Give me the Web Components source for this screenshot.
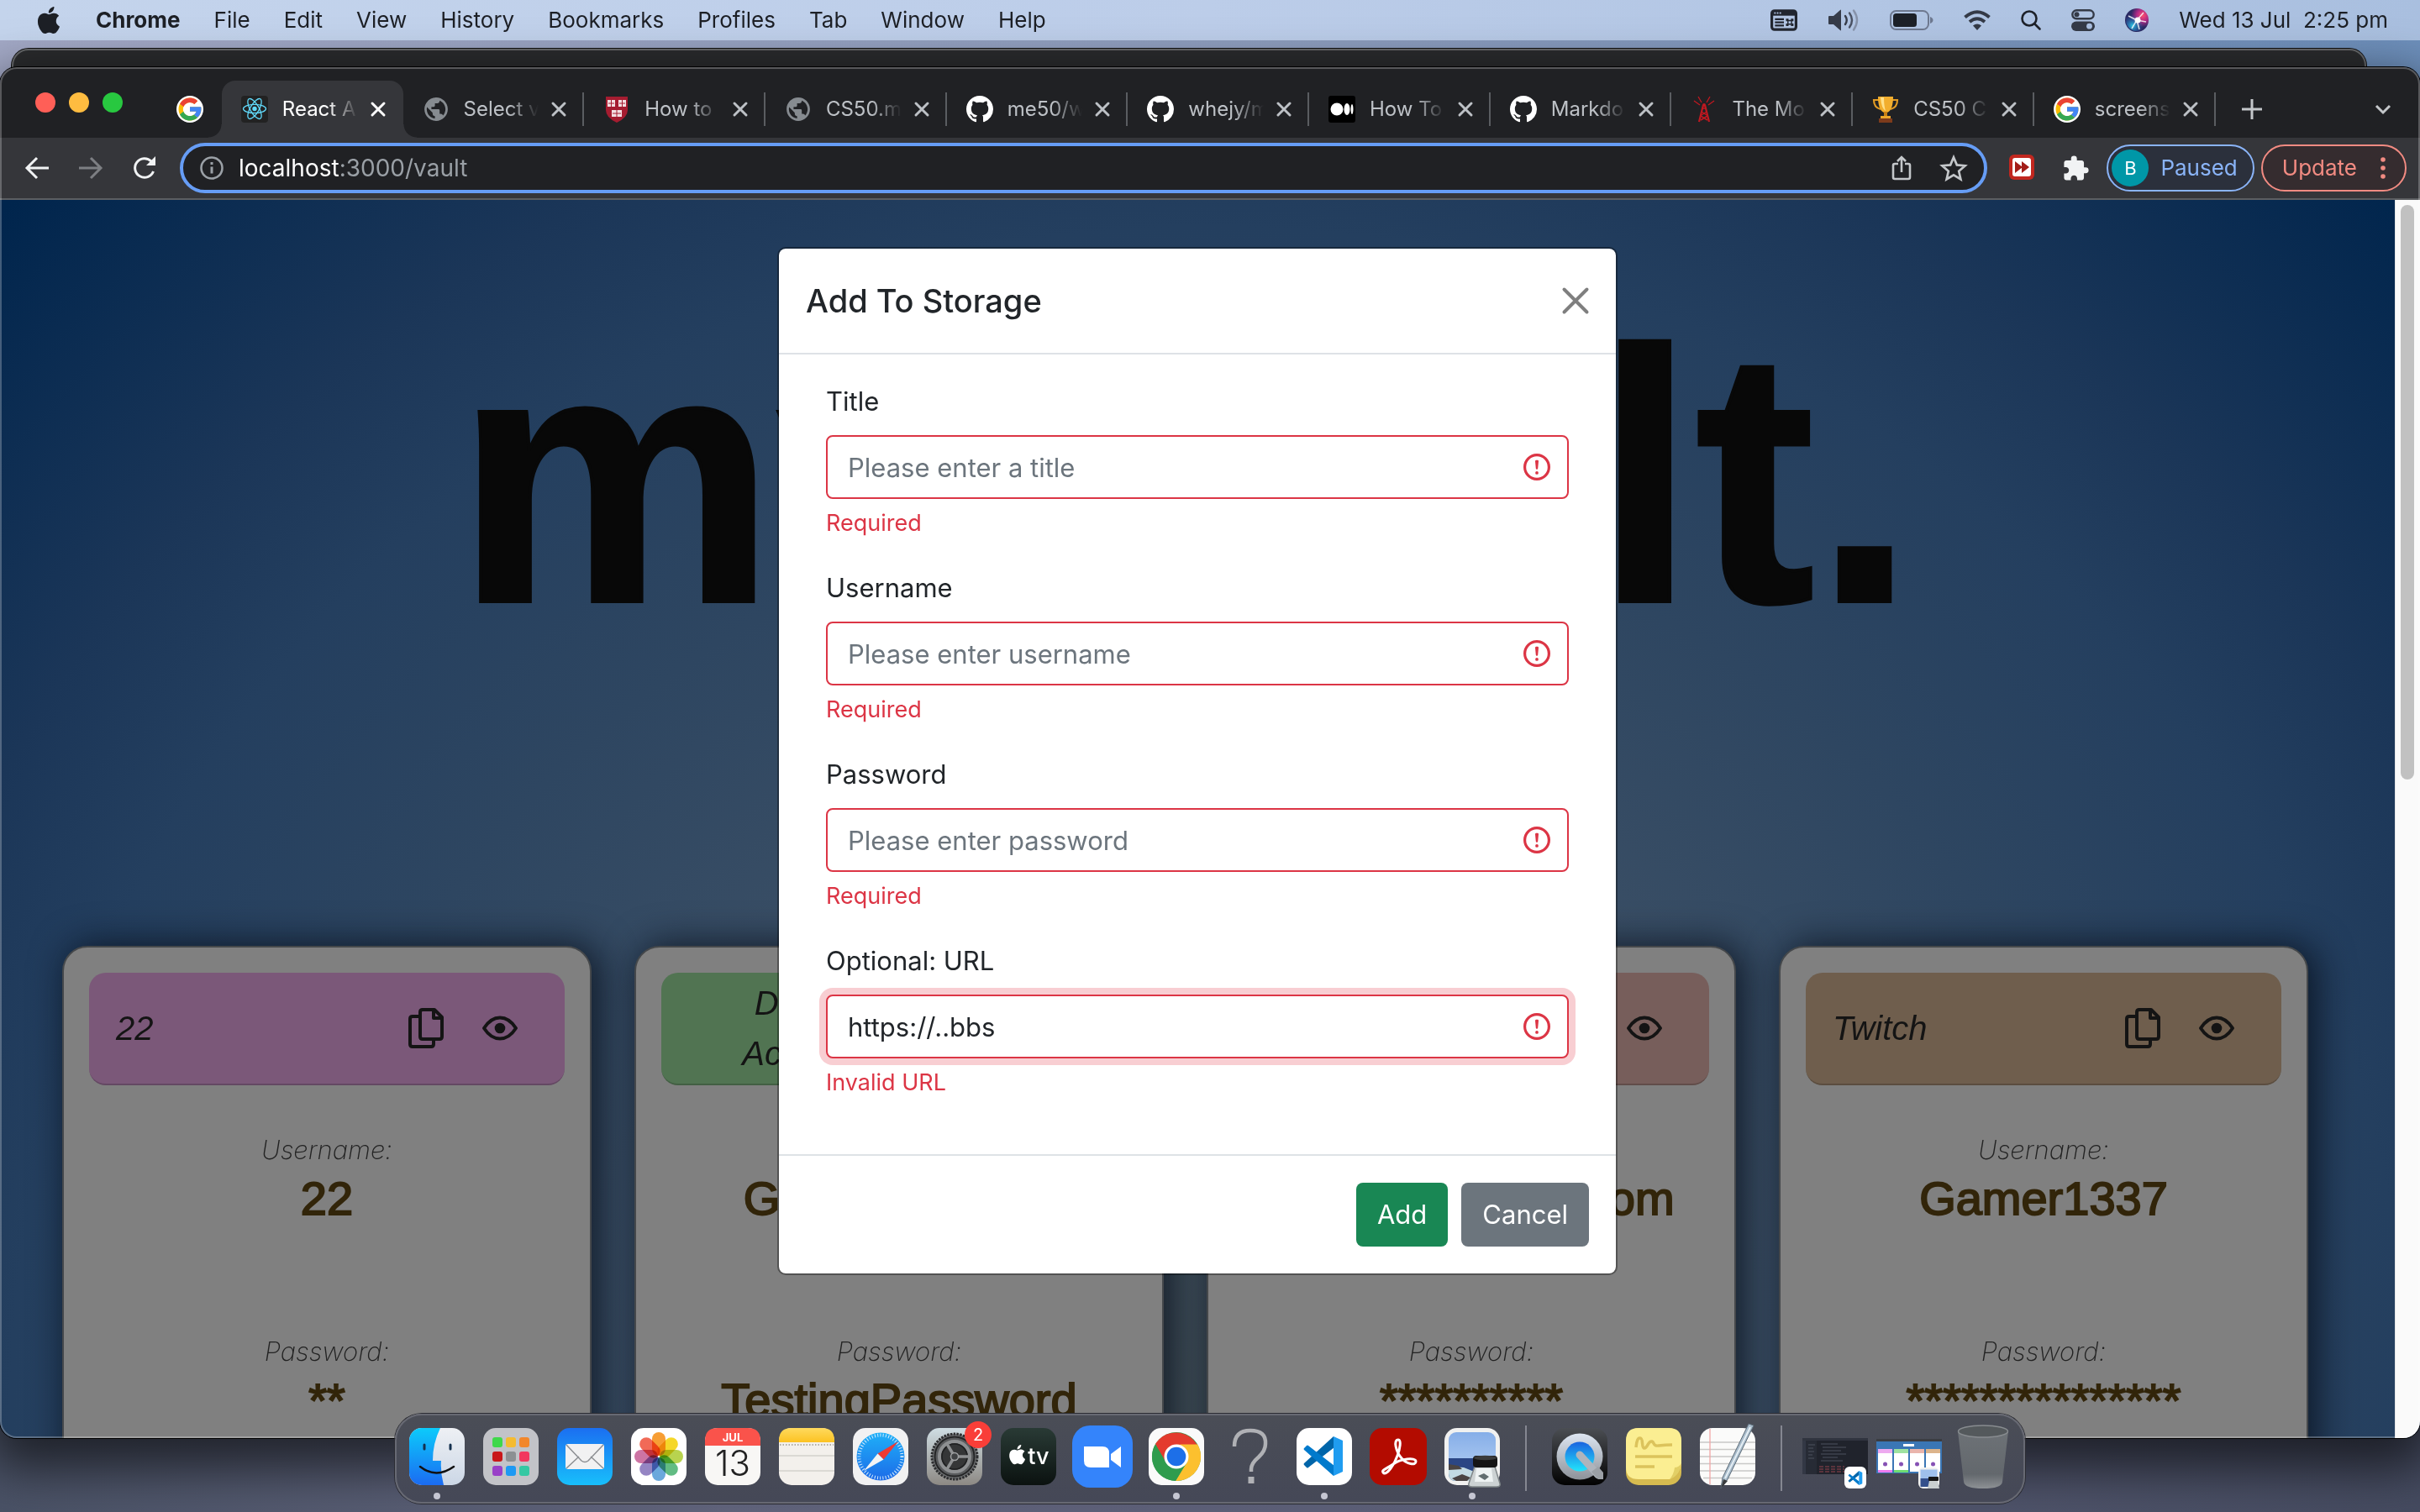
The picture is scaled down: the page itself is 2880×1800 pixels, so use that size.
<!DOCTYPE html>
<html lang="en">
<head>
<meta charset="utf-8">
<title>myVault</title>
<style>
  html, body { height: 100%; }
  body { margin: 0; overflow: hidden; font-family: Inter, "Liberation Sans", sans-serif; }
</style>
</head>
<body>
<desk-top></desk-top>
<script>
const ICONS = {
  apple: `<svg viewBox="0 0 16 16" fill="currentColor"><path d="M11.182.008C11.148-.03 9.923.023 8.857 1.18c-1.066 1.156-.902 2.482-.878 2.516s1.52.087 2.475-1.258.762-2.391.728-2.43m3.314 11.733c-.048-.096-2.325-1.234-2.113-3.422s1.675-2.789 1.698-2.854-.597-.79-1.254-1.157a3.7 3.7 0 0 0-1.563-.434c-.108-.003-.483-.095-1.254.116-.508.139-1.653.589-1.968.607-.316.018-1.256-.522-2.267-.665-.647-.125-1.333.131-1.824.328-.49.196-1.422.754-2.074 2.237-.652 1.482-.311 3.83-.067 4.56s.625 1.924 1.273 2.796c.576.984 1.34 1.667 1.659 1.899s1.219.386 1.843.067c.502-.308 1.408-.485 1.766-.472.357.013 1.061.154 1.782.539.571.197 1.111.115 1.652-.105.541-.221 1.324-1.059 2.238-2.758q.52-1.185.473-1.282"/></svg>`,
  shortcuts: `<svg viewBox="0 0 30 24"><rect x="1.5" y="1.5" width="27" height="21" rx="3" fill="none" stroke="#22262f" stroke-width="3"/><path d="M2 2h26v5H2z" fill="#22262f"/><g fill="#b0c3e2"><circle cx="5" cy="4" r="1"/><circle cx="8" cy="4" r="1"/><circle cx="11" cy="4" r="1"/></g><path d="M5 11h10M5 14.500h10M5 18h10" stroke="#22262f" stroke-width="2"/><path d="M19.500 12.500h4v4h-4zM19.500 12.500h-1.500v-1.500h1.500zM23.500 12.500v-1.500h1.500v1.500zM19.500 16.500v1.500h-1.500v-1.500zM23.500 16.500h1.500v1.500h-1.500z" fill="none" stroke="#22262f" stroke-width="1.300"/></svg>`,
  volume: `<svg viewBox="0 0 36 26"><path d="M0 9q0-1 1-1h5l8-7q1-1 1 .500v23q0 1.500-1 .500l-8-7H1q-1 0-1-1z" fill="#363c49"/><g fill="none" stroke-width="2.400" stroke-linecap="round"><path d="M20 8q3.500 5 0 10" stroke="#363c49"/><path d="M25 4.500q6 8.500 0 17" stroke="#4a5263"/><path d="M30 1.500q8 11.500 0 23" stroke="#8793aa"/></g></svg>`,
  battery: `<svg viewBox="0 0 52 24"><rect x="1" y="1" width="45" height="22" rx="6.500" fill="none" stroke="#6e7990" stroke-width="2"/><rect x="4" y="4" width="28" height="16" rx="3.500" fill="#1d2128"/><path d="M48 8q3.500 1.500 3.500 4T48 16z" fill="#6e7990"/></svg>`,
  wifi: `<svg viewBox="0 0 32 24" fill="none" stroke="#343a47" stroke-width="4"><path d="M1.500 8.500q14.500-12.500 29 0"/><path d="M7 14q9-7.500 18 0"/><path d="M16 24l-5-5.500q5-4 10 0z" fill="#343a47" stroke="none"/></svg>`,
  search: `<svg viewBox="0 0 24 24" fill="none" stroke="#1e222a" stroke-width="2.600" stroke-linecap="round"><circle cx="10" cy="10" r="8.500"/><path d="M16.500 16.500l6 6"/></svg>`,
  toggles: `<svg viewBox="0 0 28 26"><rect x="1.300" y="1.300" width="25.400" height="10" rx="5" fill="none" stroke="#343a47" stroke-width="2.400"/><circle cx="6.500" cy="6.300" r="3" fill="#343a47"/><rect y="14.500" width="28" height="11.500" rx="5.700" fill="#343a47"/><circle cx="21.500" cy="20.200" r="3.400" fill="#aabfe0"/></svg>`,
  siri: `<svg viewBox="0 0 28 28"><defs><radialGradient id="a" cx=".75" cy=".3"><stop offset="0" stop-color="#ff4f6e"/><stop offset=".5" stop-color="#b02a86"/><stop offset="1" stop-color="#2a2a63"/></radialGradient><radialGradient id="b" cx=".3" cy=".75"><stop offset="0" stop-color="#2cc9e6"/><stop offset="1" stop-color="#2a5fc0" stop-opacity="0"/></radialGradient></defs><circle cx="14" cy="14" r="14" fill="url(#a)"/><circle cx="14" cy="14" r="13" fill="url(#b)"/><path d="M14 14L4 9M14 14l-6 10M14 14l3 11M14 14l8-9M14 14l11 2" stroke="#fff" stroke-width="1.600" opacity=".8"/><circle cx="15" cy="14" r="3.500" fill="#fff"/></svg>`,
  google: `<svg viewBox="0 0 32 32"><circle cx="16" cy="16" r="16" fill="#fff"/><g transform="translate(-.200 -.200) scale(.675)"><path fill="#FBBC05" d="M43.611,20.083H42V20H24v8h11.303c-1.649,4.657-6.08,8-11.303,8c-6.627,0-12-5.373-12-12c0-6.627,5.373-12,12-12c3.059,0,5.842,1.154,7.961,3.039l5.657-5.657C34.046,6.053,29.268,4,24,4C12.955,4,4,12.955,4,24c0,11.045,8.955,20,20,20c11.045,0,20-8.955,20-20C44,22.659,43.862,21.35,43.611,20.083z"/><path fill="#EA4335" d="M6.306,14.691l6.571,4.819C14.655,15.108,18.961,12,24,12c3.059,0,5.842,1.154,7.961,3.039l5.657-5.657C34.046,6.053,29.268,4,24,4C16.318,4,9.656,8.337,6.306,14.691z"/><path fill="#34A853" d="M24,44c5.166,0,9.86-1.977,13.409-5.192l-6.19-5.238C29.211,35.091,26.715,36,24,36c-5.202,0-9.619-3.317-11.283-7.946l-6.522,5.025C9.505,39.556,16.227,44,24,44z"/><path fill="#4285F4" d="M43.611,20.083H42V20H24v8h11.303c-0.792,2.237-2.231,4.166-4.087,5.571l6.19,5.238C36.971,39.205,44,34,44,24C44,22.659,43.862,21.35,43.611,20.083z"/></g></svg>`,
  react: `<svg viewBox="0 0 32 32"><rect width="32" height="32" rx="4" fill="#222"/><g fill="none" stroke="#61dafb" stroke-width="1.300"><ellipse cx="16" cy="15.500" rx="13.500" ry="5.200"/><ellipse cx="16" cy="15.500" rx="13.500" ry="5.200" transform="rotate(60 16 15.500)"/><ellipse cx="16" cy="15.500" rx="13.500" ry="5.200" transform="rotate(120 16 15.500)"/></g><circle cx="16" cy="15.500" r="2.700" fill="#61dafb"/></svg>`,
  globe: `<svg viewBox="0.500 0.500 23 23"><path fill="#868b90" d="M12 2C6.480 2 2 6.480 2 12s4.480 10 10 10 10-4.480 10-10S17.520 2 12 2zm-1 17.930c-3.950-.490-7-3.850-7-7.930 0-.620.080-1.210.210-1.790L9 15v1c0 1.100.900 2 2 2v1.930zm6.900-2.540c-.260-.810-1-1.390-1.900-1.390h-1v-3c0-.550-.450-1-1-1H8v-2h2c.550 0 1-.450 1-1V7h2c1.100 0 2-.900 2-2v-.410c2.930 1.190 5 4.060 5 7.410 0 2.080-.800 3.970-2.100 5.390z"/></svg>`,
  harvard: `<svg viewBox="0 0 32 32"><path d="M3 1h26v16q0 9-13 15Q3 26 3 17z" fill="#a51c30"/><g fill="#f3dfe2"><rect x="5" y="5" width="9" height="8"/><rect x="18" y="5" width="9" height="8"/><rect x="10" y="17" width="12" height="8"/></g><g stroke="#a51c30"><path d="M9.500 5v8M22.500 5v8M16 17v8M6 9h7M19 9h7M11 21h10" stroke-width="1"/></g></svg>`,
  github: `<svg viewBox="0 0 16 16" fill="#fff"><path d="M8 0C3.580 0 0 3.580 0 8c0 3.540 2.290 6.530 5.470 7.590.4.070.55-.170.55-.380 0-.190-.010-.820-.010-1.490-2.010.370-2.530-.490-2.690-.940-.090-.230-.480-.940-.820-1.130-.280-.150-.680-.520-.010-.530.630-.010 1.080.580 1.230.820.720 1.210 1.870.870 2.330.660.070-.520.280-.870.510-1.070-1.780-.2-3.640-.890-3.640-3.950 0-.870.310-1.590.820-2.150-.080-.2-.360-1.020.080-2.120 0 0 .670-.210 2.200.820.640-.180 1.320-.270 2-.270s1.360.090 2 .270c1.530-1.040 2.200-.820 2.200-.820.440 1.100.160 1.920.080 2.120.510.560.820 1.270.820 2.150 0 3.070-1.870 3.750-3.650 3.950.290.250.540.730.540 1.480 0 1.070-.010 1.930-.010 2.200 0 .210.150.460.550.380A8.010 8.010 0 0 0 16 8c0-4.420-3.580-8-8-8"/></svg>`,
  medium: `<svg viewBox="0 0 32 32"><rect width="32" height="32" rx="3" fill="#000"/><g fill="#fff"><circle cx="10" cy="16" r="7.500"/><ellipse cx="22" cy="16" rx="3.500" ry="7"/><ellipse cx="28" cy="16" rx="1.500" ry="6"/></g></svg>`,
  tower: `<svg viewBox="0 0 32 32" fill="none" stroke="#c01820"><path d="M15 11l-5 20M17 11l5 20" stroke-width="2.200"/><path d="M14 15h4M13 19l6 4M19 19l-6 4M12 24l8 5M20 24l-8 5" stroke-width="1.500"/><path d="M13 8L9 1M19 8l4-7M11 11L4 6M21 11l7-5" stroke-width="1.300"/><circle cx="16" cy="11" r="2" fill="#c01820" stroke="none"/></svg>`,
  trophy: `<svg viewBox="0 0 32 32"><path d="M8 5H2q0 9 8 11M24 5h6q0 9-8 11" fill="none" stroke="#e09a24" stroke-width="2.200"/><path d="M7 1h18q0 16-7 19h-4Q7 17 7 1z" fill="#f2ae2e"/><path d="M10 2h4q0 10 2 16-5-3-6-16z" fill="#ffe08a"/><path d="M14 19h4v5h-4z" fill="#c77f14"/><path d="M10 24h12v3H10z" fill="#eca62b"/><path d="M8 27h16v5H8z" fill="#7d3b1b"/></svg>`,
  close: `<svg viewBox="0 0 20 20" stroke="currentColor" stroke-width="3" stroke-linecap="round"><path d="M3 3l14 14M17 3L3 17"/></svg>`,
  plus: `<svg viewBox="0 0 24 24" stroke="currentColor" stroke-width="3"><path d="M12 0v24M0 12h24"/></svg>`,
  chevron: `<svg viewBox="0 0 20 12" fill="none" stroke="currentColor" stroke-width="3"><path d="M2 2l8 8 8-8"/></svg>`,
  back: `<svg viewBox="0 0 28 28" fill="none" stroke="currentColor" stroke-width="3"><path d="M14 2L2 14l12 12M2 14h26"/></svg>`,
  forward: `<svg viewBox="0 0 28 28" fill="none" stroke="currentColor" stroke-width="3"><path d="M14 2l12 12-12 12M26 14H0"/></svg>`,
  reload: `<svg viewBox="0 0 28 28"><path d="M24.500 18A11.300 11.300 0 1 1 22 6" fill="none" stroke="currentColor" stroke-width="3"/><path d="M27 0v11H16z" fill="currentColor"/></svg>`,
  info: `<svg viewBox="0 0 28 28" fill="none" stroke="currentColor"><circle cx="14" cy="14" r="12.500" stroke-width="2.600"/><path d="M14 12.500v8M14 7v3" stroke-width="3"/></svg>`,
  share: `<svg viewBox="0 0 24 30" fill="none" stroke="currentColor" stroke-width="2.600"><path d="M8 10H4q-2 0-2 2v14q0 2 2 2h16q2 0 2-2V12q0-2-2-2h-4M12 20V3M7 7l5-5 5 5"/></svg>`,
  star: `<svg viewBox="0 0 30 30" fill="none" stroke="currentColor" stroke-width="2.500"><path d="M15 3l3.600 8.600 9.200.8-7 6.100 2.100 9.100-7.900-4.800-7.900 4.800 2.100-9.100-7-6.100 9.200-.8z"/></svg>`,
  ffwd: `<svg viewBox="0 0 30 30"><rect width="30" height="30" rx="6" fill="#c1271f"/><rect x="4" y="4" width="22" height="22" rx="3" fill="#fff"/><path d="M7 8l9 7-9 7zM15 8l9 7-9 7z" fill="#a31d18"/></svg>`,
  puzzle: `<svg viewBox="1 0 23 23" fill="#f1f3f4"><path d="M20.500 11H19V7c0-1.100-.9-2-2-2h-4V3.500a2.500 2.500 0 0 0-5 0V5H4c-1.100 0-1.990.9-1.990 2v3.800H3.500c1.490 0 2.700 1.210 2.700 2.700s-1.210 2.700-2.700 2.700H2V20c0 1.100.9 2 2 2h3.800v-1.500c0-1.490 1.210-2.700 2.700-2.700s2.700 1.210 2.700 2.700V22H17c1.100 0 2-.9 2-2v-4h1.500a2.500 2.500 0 0 0 0-5z"/></svg>`,
  dots: `<svg viewBox="0 0 6 28" fill="currentColor"><circle cx="3" cy="4" r="2.800"/><circle cx="3" cy="14" r="2.800"/><circle cx="3" cy="24" r="2.800"/></svg>`,
  copy: `<svg viewBox="0 0 44 50" fill="none" stroke="currentColor" stroke-width="4" stroke-linejoin="round"><path d="M14 11H6q-3 0-3 3v30q0 3 3 3h22q3 0 3-3v-6"/><path d="M17 3h15l9 9v23q0 3-3 3H18q-3 0-3-3V6q0-3 3-3z"/><path d="M31 4v9h10"/></svg>`,
  eye: `<svg viewBox="0 0 42 30"><path d="M2 15Q10 2.500 21 2.500T40 15Q32 27.500 21 27.500T2 15z" fill="none" stroke="currentColor" stroke-width="4" stroke-linejoin="round"/><circle cx="21" cy="15" r="6.300" fill="currentColor"/></svg>`,
  alert: `<svg viewBox="0 0 12 12" fill="none" stroke="#dc3545"><circle cx="6" cy="6" r="5.400" stroke-width="1.200"/><path d="M5.700 3.400h.6L6 6.600z" stroke-linejoin="round" stroke-width=".9"/><circle cx="6" cy="8.600" r=".7" fill="#dc3545" stroke="none"/></svg>`,
  x: `<svg viewBox="0 0 32 32" stroke="#7f7f7f" stroke-width="4" stroke-linecap="round"><path d="M2.500 2.500l27 27M29.500 2.500l-27 27"/></svg>`,

  finder: `<svg viewBox="0 0 66 68"><defs><linearGradient id="a" x2="0" y2="1"><stop stop-color="#0ccbfb"/><stop offset="1" stop-color="#1b6bf2"/></linearGradient><linearGradient id="b" x2="0" y2="1"><stop stop-color="#eef0f4"/><stop offset="1" stop-color="#ccd7e6"/></linearGradient><clipPath id="c"><rect width="66" height="68" rx="15"/></clipPath></defs><g clip-path="url(#c)"><rect width="66" height="68" fill="url(#b)"/><path d="M0 0h37Q28 18 28 39h10q-1 14 3 29H0z" fill="url(#a)"/></g><path d="M18 20v5M49 20v5" stroke="#15304e" stroke-width="3" stroke-linecap="round"/><path d="M13 46q19 15 40 0" fill="none" stroke="#111" stroke-width="2.500" stroke-linecap="round"/></svg>`,
  launchpad: (() => {
    const c = ['#3fd84b', '#f5bb30', '#f2872c', '#c9171a', '#8c9093', '#f2385e', '#9940c8', '#1d99f3', '#35c8a3'];
    return `<svg viewBox="0 0 66 68"><rect width="66" height="68" rx="15" fill="#c2c3c8"/>${c.map((f, i) => `<rect x="${11 + (i % 3) * 16}" y="${11 + Math.floor(i / 3) * 17}" width="12" height="12" rx="3" fill="${f}"/>`).join('')}</svg>`;
  })(),
  mail: `<svg viewBox="0 0 66 68"><defs><linearGradient id="a" x2="0" y2="1"><stop stop-color="#1b6ff1"/><stop offset="1" stop-color="#18bffb"/></linearGradient></defs><rect width="66" height="68" rx="15" fill="url(#a)"/><rect x="10" y="19" width="46" height="30" rx="3" fill="#f1f1f2"/><path d="M11 20l18 19q4 3 8 0l18-19M11 48l15-14M55 48L40 34" fill="none" stroke="#8d8f93" stroke-width="1.500"/></svg>`,
  photos: (() => {
    const c = ['#f7941d', '#f4d312', '#b0cf3c', '#51b575', '#5a9fd8', '#8a78bd', '#c8659a', '#f05a45'];
    return `<svg viewBox="0 0 66 68"><rect width="66" height="68" rx="15" fill="#fff"/><g style="isolation:isolate">${c.map((f, i) => `<rect x="25" y="5" width="16" height="28" rx="8" fill="${f}" opacity=".9" style="mix-blend-mode:multiply" transform="rotate(${i * 45} 33 34)"/>`).join('')}</g></svg>`;
  })(),
  calendar: `<svg viewBox="0 0 66 68"><rect width="66" height="68" rx="15" fill="#f8f7f5"/><path d="M0 21v-6Q0 0 15 0h36q15 0 15 15v6z" fill="#fa534b"/><text x="33" y="16" text-anchor="middle" font-size="13" font-weight="700" fill="#fff">JUL</text><text x="33" y="57" text-anchor="middle" font-size="42" font-weight="300" fill="#222">13</text></svg>`,
  notes: `<svg viewBox="0 0 66 68"><defs><linearGradient id="a" x2="0" y2="1"><stop stop-color="#ffda5e"/><stop offset="1" stop-color="#fcc222"/></linearGradient></defs><rect width="66" height="68" rx="15" fill="#f3f0ec"/><path d="M0 17v-2Q0 0 15 0h36q15 0 15 15v2z" fill="url(#a)"/><path d="M1 20h64" stroke="#9b978f" stroke-width="1.500" stroke-dasharray="1.500 2"/><path d="M0 33h66M0 51h66" stroke="#d4d1cb" stroke-width="1.500"/></svg>`,
  safari: `<svg viewBox="0 0 66 68"><defs><linearGradient id="a" x2="0" y2="1"><stop stop-color="#1fb0f8"/><stop offset="1" stop-color="#1c6be8"/></linearGradient></defs><rect width="66" height="68" rx="15" fill="#f1f1f2"/><circle cx="33" cy="34" r="28.500" fill="url(#a)"/><circle cx="33" cy="34" r="25.500" fill="none" stroke="#d6ecfd" stroke-width="4" stroke-dasharray="1 2.300"/><path d="M54 16L29.500 30.500l7 7z" fill="#f03a32"/><path d="M13 51l23.500-13.500-7-7z" fill="#f3f4f5"/></svg>`,
  settings: `<svg viewBox="0 0 66 68"><defs><linearGradient id="a" x2="0" y2="1"><stop stop-color="#cfdde3"/><stop offset="1" stop-color="#8d8984"/></linearGradient></defs><rect width="66" height="68" rx="15" fill="url(#a)"/><circle cx="33" cy="34" r="27" fill="#6f7173" stroke="#2c2d2f" stroke-width="3" stroke-dasharray="2.500 1.300"/><circle cx="33" cy="34" r="23.500" fill="#595b5d" stroke="#242526" stroke-width="2"/><circle cx="33" cy="34" r="18" fill="#353637" stroke="#8e9092" stroke-width="4"/><circle cx="33" cy="34" r="15" fill="none" stroke="#1f2021" stroke-width="1.500"/><path d="M33 34h17M33 34l-9-15M33 34l-9 15" stroke="#8e9092" stroke-width="3.500"/><circle cx="33" cy="34" r="4.500" fill="#404244" stroke="#a1a3a5" stroke-width="1.500"/></svg>`,
  appletv: `<svg viewBox="0 0 66 68"><defs><linearGradient id="a" x2="0" y2="1"><stop stop-color="#293a35"/><stop offset="1" stop-color="#0b1210"/></linearGradient></defs><rect width="66" height="68" rx="15" fill="url(#a)"/><g transform="translate(8 20) scale(1.450)" fill="#fff"><path d="M11.182.008C11.148-.03 9.923.023 8.857 1.180c-1.066 1.156-.902 2.482-.878 2.516s1.520.087 2.475-1.258.762-2.391.728-2.430m3.314 11.733c-.048-.096-2.325-1.234-2.113-3.422s1.675-2.789 1.698-2.854-.597-.790-1.254-1.157a3.700 3.700 0 0 0-1.563-.434c-.108-.003-.483-.095-1.254.116-.508.139-1.653.589-1.968.607-.316.018-1.256-.522-2.267-.665-.647-.125-1.333.131-1.824.328-.490.196-1.422.754-2.074 2.237-.652 1.482-.311 3.830-.067 4.560s.625 1.924 1.273 2.796c.576.984 1.340 1.667 1.659 1.899s1.219.386 1.843.067c.502-.308 1.408-.485 1.766-.472.357.013 1.061.154 1.782.539.571.197 1.111.115 1.652-.105.541-.221 1.324-1.059 2.238-2.758q.520-1.185.473-1.282"/></g><text x="45" y="43" text-anchor="middle" font-size="27" font-weight="500" fill="#fff">tv</text></svg>`,
  zoom: `<svg viewBox="0 0 66 68"><rect x="-3" y="-3" width="72" height="74" rx="21" fill="#3484fb"/><path d="M11 22h22q8 0 8 8v17H19q-8 0-8-8z" fill="#fff"/><path d="M43 31l12-9v25l-12-9z" fill="#fff"/></svg>`,
  chrome: `<svg viewBox="0 0 66 68"><rect width="66" height="68" rx="15" fill="#fafafa"/><circle cx="33" cy="34" r="29" fill="#2f9c4e"/><path d="M33 34h14.500L58 20.500A29 29 0 0 0 8 19z" fill="#e43b2e"/><path d="M33 19.500h25.200A29 29 0 0 1 32 63l13-22z" fill="#fcc02e"/><path d="M8 19.200L20.500 41 33 34l5-14.500z" fill="#e43b2e"/><path d="M8 19.200A29 29 0 0 0 32 63l13.500-22L33 34 20.500 41z" fill="#2f9c4e"/><circle cx="33" cy="34" r="14.500" fill="#fff"/><circle cx="33" cy="34" r="11.300" fill="#1d6fe8"/></svg>`,
  question: `<svg viewBox="0 0 66 68" fill="none"><path d="M14 22Q14 3 33 3t18 16Q51 27 43 34.500 34 42 34 49v3" stroke="#b0b1b5" stroke-width="4.500"/><rect x="30.500" y="58" width="7" height="8" fill="#b0b1b5"/></svg>`,
  vscode: `<svg viewBox="0 0 66 68"><rect width="66" height="68" rx="15" fill="#fff"/><path d="M44 10L9 42q-1 1 0 2l3 3q1 1 2 0l31-24z" fill="#0065a9"/><path d="M44 57L9 26q-1-1 0-2l3-3q1-1 2 0l31 24z" fill="#007acc"/><path d="M44 10l11 5v37l-11 5z" fill="#1f9cf0"/></svg>`,
  acrobat: `<svg viewBox="0 0 66 68"><rect width="68" height="68" x="-1" rx="15" fill="#b30b00"/><path d="M33 14c-6 0-3 14 4 22 6 7 17 9 17 4 0-6-19-3-27 3-9 6-14 7-12 10 4 5 14-11 17-20 3-8 5-19 1-19z" fill="none" stroke="#fff" stroke-width="3"/></svg>`,
  preview: `<svg viewBox="0 0 66 68"><defs><linearGradient id="a" x2="0" y2="1"><stop stop-color="#86aee8"/><stop offset="1" stop-color="#b9d3f4"/></linearGradient></defs><rect width="66" height="68" rx="15" fill="#f1f1f0"/><rect x="5" y="5" width="56" height="58" rx="9" fill="url(#a)"/><path d="M5 36h56v18q0 9-9 9H14q-9 0-9-9z" fill="#2b4684"/><path d="M5 46l18 1 10 4h28v3q0 9-9 9H14q-9 0-9-9z" fill="#c3dbe3"/><path d="M5 43l12 2 4 4-16 1zM9 60l12-5 10 4-4 4H14z" fill="#4a4443"/><path d="M36 46l-7 20q-1 4 4 4h29q5 0 4-4l-6-20z" fill="#ccd2d3" stroke="#7f8688" stroke-width="1.500"/><path d="M38 48l-2 16h22l-2-16z" fill="#eef3f3"/><path d="M40 57l7-3 6 4-5 4z" fill="#626e70"/><rect x="34" y="33" width="29" height="14" rx="4" fill="#151515"/><ellipse cx="48.500" cy="35.500" rx="13.500" ry="2.800" fill="#3b3b3b"/></svg>`,
  quicktime: `<svg viewBox="0 0 66 68"><defs><linearGradient id="a" x2="0" y2="1"><stop stop-color="#4b4e53"/><stop offset="1" stop-color="#020202"/></linearGradient><linearGradient id="b" x2="0" y2="1"><stop stop-color="#dde6f2"/><stop offset="1" stop-color="#8d9299"/></linearGradient><linearGradient id="c" x2="0" y2="1"><stop stop-color="#1a63e0"/><stop offset="1" stop-color="#22e4fb"/></linearGradient></defs><rect width="66" height="68" rx="15" fill="url(#a)"/><circle cx="33" cy="34" r="27.500" fill="url(#b)"/><circle cx="33" cy="34" r="17.500" fill="url(#c)"/><path d="M33 32l22 24" stroke="#aeb4bc" stroke-width="9" stroke-linecap="round"/><path d="M47 52l8-6 6 7v8h-6z" fill="#9ba0a6"/></svg>`,
  stickies: `<svg viewBox="0 0 66 68"><rect width="66" height="68" rx="15" fill="#d6bb50"/><path d="M0 15Q0 0 15 0h36q15 0 15 15v27q-2 14-14 19H15Q0 61 0 47z" fill="#fbee92"/><path d="M66 42q-3 5-8 5-1 8-6 14 12-4 14-19z" fill="#e2cf66"/><path d="M12 23q1-12 5-11c4 0 1 12 5 12s4-9 9-8c3 1 1 6 8 5q8-1 16-1M11 34h44M11 46h23" fill="none" stroke="#dcc35c" stroke-width="3.500"/></svg>`,
  textedit: `<svg viewBox="0 0 66 68"><rect width="66" height="68" rx="15" fill="#fbfbfa"/><path d="M0 17h66M0 25.500h66M0 34h66M0 42.500h66M0 51h66M4 59.500h58" stroke="#c9c9c8" stroke-width="1.300"/><path d="M12 1v66" stroke="#f2a6a6" stroke-width="1.300"/><path d="M58-5l6 2-31 64-8 11 2-13z" fill="#a9bccb" stroke="#5c6b78" stroke-width="1"/><path d="M60-1L30 60" stroke="#e6eff5" stroke-width="1.800"/><path d="M28 61l5 2-8 9z" fill="#3a3c3e"/></svg>`,
  thumbcode: `<svg viewBox="0 0 78 68"><rect y="12" width="78" height="43" fill="#20232c"/><rect y="12" width="78" height="3" fill="#30343f"/><rect y="15" width="4" height="40" fill="#333845"/><rect x="4" y="15" width="13" height="40" fill="#272b35"/><path d="M7 20h8M7 24h6M7 28h7M7 32h5M7 36h7M22 19h20M24 23h28M24 27h22M22 31h30M24 35h18M22 39h26" stroke="#4d535e" stroke-width="1"/><path d="M20 46h30M20 49h30M20 52h30" stroke="#6e3a42" stroke-width="1.500" stroke-dasharray="5 2"/><rect x="50" y="46" width="26" height="26" rx="6" fill="#fff"/><g transform="translate(51.500 47.500) scale(.36)"><path d="M44 10L9 42q-1 1 0 2l3 3q1 1 2 0l31-24z" fill="#0065a9"/><path d="M44 57L9 26q-1-1 0-2l3-3q1-1 2 0l31 24z" fill="#007acc"/><path d="M44 10l11 5v37l-11 5z" fill="#1f9cf0"/></g></svg>`,
  thumbpage: `<svg viewBox="0 0 78 68"><rect y="13" width="78" height="41" fill="#3a76b5"/><rect y="13" width="78" height="3" fill="#3b3d42"/><rect x="32" y="19" width="13" height="3" fill="#fff"/><g fill="#fff"><rect x="2" y="25" width="17" height="27"/><rect x="21" y="25" width="17" height="27"/><rect x="40" y="25" width="17" height="27"/><rect x="59" y="25" width="17" height="27"/></g><rect x="2" y="25" width="17" height="5" fill="#eeaaf0"/><rect x="21" y="25" width="17" height="5" fill="#9fe2a0"/><rect x="40" y="25" width="17" height="5" fill="#eab5ac"/><rect x="59" y="25" width="17" height="5" fill="#dcb48c"/><rect x="2" y="50" width="17" height="3" fill="#ee7df0"/><rect x="21" y="50" width="17" height="3" fill="#6fdc72"/><g fill="#8651b4"><circle cx="10.500" cy="43" r="2.500"/><circle cx="29.500" cy="43" r="2.500"/><circle cx="48.500" cy="43" r="2.500"/><circle cx="67.500" cy="43" r="2.500"/></g><rect x="50" y="47" width="25" height="25" rx="6" fill="#f1f1f0"/><rect x="52.500" y="49.500" width="20" height="11" fill="#9fc0ec"/><rect x="52.500" y="60" width="20" height="10" fill="#34508c"/><rect x="62" y="58" width="12" height="5" rx="1" fill="#161616"/><path d="M63 63h10l2 9H61z" fill="#c9cfd0"/></svg>`,
  trash: `<svg viewBox="0 0 66 68"><defs><linearGradient id="a" x2="0" y2="1"><stop stop-color="#71767a"/><stop offset=".75" stop-color="#666b6f"/><stop offset="1" stop-color="#95999c"/></linearGradient></defs><path d="M3 4l7 60q1 8 23 8t23-8l7-60z" fill="url(#a)" opacity=".9"/><ellipse cx="33" cy="4" rx="29.500" ry="7" fill="#54595c" stroke="#888c90" stroke-width="1.500"/></svg>`
};

/* Registers an element whose open shadow root is filled from render(el). */
function define(name, css, render) {
  customElements.define(name, class extends HTMLElement {
    connectedCallback() {
      if (this.shadowRoot) return;
      const t = document.createElement('template');
      t.innerHTML = `<style>*{box-sizing:border-box}button{font:inherit;color:inherit;background:none;border:0;padding:0;margin:0}${css}</style>${render(this)}`;
      this.attachShadow({ mode: 'open' }).append(t.content.cloneNode(true));
    }
  });
}
const attr = (el, n) => el.getAttribute(n) || '';

define('ui-icon', `:host{display:block;flex:none}svg{display:block;width:100%;height:100%;overflow:visible}`,
  el => ICONS[attr(el, 'name')]);

define('menu-bar', `
  :host{display:flex;align-items:center;justify-content:space-between;height:48px;padding:0 38px 0 42px;
    background:linear-gradient(90deg,#c4d4ec,#bccde9 50%,#a9bfdf);color:#1d2026;font-size:26px;line-height:32px}
  nav,.status{display:flex;align-items:center}
  nav{gap:40px} nav a{color:inherit;text-decoration:none}
  .app{font-weight:700}
  .status{gap:36px} time{white-space:pre}`,
  () => `<nav><ui-icon name="apple" style="width:32px;height:32px"></ui-icon><a class="app" href="#">Chrome</a>${
    ['File', 'Edit', 'View', 'History', 'Bookmarks', 'Profiles', 'Tab', 'Window', 'Help'].map(t => `<a href="#">${t}</a>`).join('')}</nav>
  <div class="status">${[['shortcuts', 32, 26], ['volume', 38, 26], ['battery', 52, 24], ['wifi', 32, 24], ['search', 24, 24], ['toggles', 28, 26], ['siri', 28, 28]]
    .map(([n, w, h]) => `<ui-icon name="${n}" style="width:${w}px;height:${h}px"></ui-icon>`).join('')}<time>Wed 13 Jul  2:25 pm</time></div>`);

define('browser-tab', `
  :host{display:flex;flex:1;min-width:0;height:68px;align-items:center;padding:0 20px 0 23px;position:relative;color:#bdc1c6;font-size:24px}
  .title{flex:1;min-width:0;margin:0 14px 0 17px;overflow:hidden;white-space:pre;line-height:32px;
    -webkit-mask-image:linear-gradient(90deg,#000 60%,transparent);mask-image:linear-gradient(90deg,#000 60%,transparent)}
  button{display:block;width:20px;height:20px}
  :host(:not([active]))::after{content:"";position:absolute;right:0;top:14px;width:2px;height:40px;background:#5a5d61}
  :host([active]){background:#35363a;color:#fff;border-radius:16px 16px 0 0}
  :host([active])::before,:host([active])::after{content:"";position:absolute;bottom:0;width:16px;height:16px}
  :host([active])::before{left:-16px;background:radial-gradient(circle at 0 0,transparent 15px,#35363a 16px)}
  :host([active])::after{right:-16px;background:radial-gradient(circle at 100% 0,transparent 15px,#35363a 16px)}`,
  el => `<ui-icon name="${attr(el, 'icon')}" style="width:32px;height:32px"></ui-icon><span class="title">${attr(el, 'label')}</span><button aria-label="Close tab"><ui-icon name="close"></ui-icon></button>`);

define('tab-strip', `
  :host{display:flex;height:84px;padding:16px 34px 0 40px;background:#202124;color:#c4c7ca}
  .lights{display:flex;gap:16px;height:52px;align-items:center;width:172px;padding-left:2px}
  .lights i{width:24px;height:24px;border-radius:50%}
  .lights+ui-icon{margin-top:18px;margin-right:22px}
  .tabs{display:flex;flex:1}
  .new{width:70px;height:68px;padding-left:32px}
  .more{width:140px;padding-left:120px;height:68px}`,
  () => `<div class="lights"><i style="background:#ff5f57"></i><i style="background:#febc40"></i><i style="background:#28c840"></i></div>
  <ui-icon name="google" style="width:32px;height:32px"></ui-icon>
  <div class="tabs">
    <browser-tab active icon="react" label="React A"></browser-tab>
    ${[['globe', 'Select v'], ['harvard', 'How to '], ['globe', 'CS50.m'], ['github', 'me50/w'], ['github', 'whejy/m'], ['medium', 'How To '], ['github', 'Markdo'], ['tower', 'The Mo'], ['trophy', 'CS50 C'], ['google', 'screens']]
      .map(([i, t]) => `<browser-tab icon="${i}" label="${t}"></browser-tab>`).join('')}
  </div>
  <button class="new" aria-label="New tab"><ui-icon name="plus" style="width:24px;height:24px"></ui-icon></button>
  <button class="more" aria-label="Search tabs"><ui-icon name="chevron" style="width:20px;height:12px"></ui-icon></button>`);

define('tool-bar', `
  :host{display:flex;align-items:center;height:74px;padding:0 16px 0 30px;background:#35363a;border-bottom:2px solid #5c5e61;color:#f1f3f4;font-size:28px;line-height:36px}
  .nav{display:flex;gap:36px;width:184px}
  .url{flex:1;display:flex;align-items:center;height:60px;border:4px solid #669df6;border-radius:30px;background:#202124;padding:0 20px;color:#9aa0a6}
  .url p{flex:1;margin:0 0 0 18px} .url b{font-weight:400;color:#fff}
  .url ui-icon+ui-icon{margin-left:34px}
  .ext{display:flex;gap:34px;margin:0 20px 0 26px}
  .pill{display:flex;align-items:center;height:56px;border:2px solid;border-radius:28px;font-size:26px}
  .paused{color:#8ab4f8;background:#2b303c;padding:0 18px 0 4px;gap:14px;margin-right:8px}
  .paused i{font-style:normal;font-size:22px;width:44px;height:44px;border-radius:50%;background:#0097a7;color:#fff;display:grid;place-items:center}
  .update{color:#f28b82;background:#352c2f;padding:0 23px;gap:28px}`,
  () => `<div class="nav">
    <button aria-label="Back"><ui-icon name="back" style="width:28px;height:28px"></ui-icon></button>
    <button aria-label="Forward" style="color:#7d7f83"><ui-icon name="forward" style="width:28px;height:28px"></ui-icon></button>
    <button aria-label="Reload"><ui-icon name="reload" style="width:28px;height:28px"></ui-icon></button></div>
  <div class="url"><ui-icon name="info" style="width:28px;height:28px"></ui-icon><p><b>localhost</b>:3000/vault</p>
    <ui-icon name="share" style="width:24px;height:30px;color:#c4c7ca"></ui-icon><ui-icon name="star" style="width:32px;height:32px;color:#c4c7ca"></ui-icon></div>
  <div class="ext"><ui-icon name="ffwd" style="width:30px;height:30px"></ui-icon><ui-icon name="puzzle" style="width:32px;height:32px"></ui-icon></div>
  <button class="pill paused"><i>B</i>Paused</button>
  <button class="pill update">Update<ui-icon name="dots" style="width:6px;height:28px"></ui-icon></button>`);

define('vault-card', `
  :host{display:block;flex:1;min-width:0;height:900px;padding:30px;border:2px solid #45484b;border-radius:30px;background:#808080;
    box-shadow:8px 0 44px 2px rgba(4,10,20,.75);font-family:"Liberation Sans",Arial,sans-serif;text-align:center;color:#32250a}
  header{display:flex;align-items:center;height:134px;padding:0 56px 0 32px;border-radius:20px;border-bottom:2px solid rgba(0,0,0,.18);background:var(--tone);color:#141414;margin-bottom:53px}
  h2{flex:1;margin:0;font-size:40px;line-height:60px;font-weight:400;font-style:italic;text-align:left}
  :host([wrap]) h2{text-align:center;padding:0 88px 0 34px}
  .tools{display:flex;align-items:center;gap:45px}
  section{height:240px}
  .name{font-family:Inter,sans-serif;font-size:31px;line-height:48px;font-style:italic;font-weight:200;color:#222}
  .value{font-size:56px;line-height:68px;-webkit-text-stroke:2px #32250a;white-space:nowrap}`,
  el => `<header><h2>${attr(el, 'label')}</h2><div class="tools">
    <button aria-label="Copy"><ui-icon name="copy" style="width:44px;height:50px"></ui-icon></button>
    <button aria-label="Show"><ui-icon name="eye" style="width:42px;height:30px"></ui-icon></button></div></header>
  <section><div class="name">Username:</div><div class="value">${attr(el, 'user')}</div></section>
  <section><div class="name">Password:</div><div class="value">${attr(el, 'secret')}</div></section>`);

define('form-field', `
  :host{display:block;font-size:31px;line-height:48px;color:#212529}
  label{display:block;margin-bottom:16px}
  .box{position:relative}
  input{display:block;width:100%;height:76px;padding:12px 72px 12px 24px;border:2px solid #dc3545;border-radius:8px;font:inherit;color:#212529;background:#fff;outline:0}
  input::placeholder{color:#6c757d;opacity:1}
  :host([focused]) input{box-shadow:0 0 0 8px #f8ced2}
  ui-icon{position:absolute;right:22px;top:22px;width:32px;height:32px}
  p{margin:8px 0 0;font-size:27px;line-height:42px;color:#dc3545}`,
  el => `<label for="f">${attr(el, 'label')}</label><div class="box"><input id="f" type="text" placeholder="${attr(el, 'hint')}" value="${attr(el, 'value')}"><ui-icon name="alert"></ui-icon></div><p>${attr(el, 'error')}</p>`);

define('modal-dialog', `
  :host{display:block;width:1000px;background:#fff;background-clip:padding-box;border:2px solid rgba(0,0,0,.35);border-radius:10px;color:#212529}
  header{display:flex;align-items:center;justify-content:space-between;height:126px;padding:0 32px;border-bottom:2px solid #dee2e6}
  h1{margin:0;font-size:38px;line-height:60px;font-weight:500}
  .body{display:flex;flex-direction:column;gap:32px;padding:32px 56px 64px}
  footer{display:flex;justify-content:flex-end;gap:16px;padding:32px;border-top:2px solid #dee2e6}
  footer button{height:76px;padding:0 25px;border-radius:8px;color:#fff;font-size:31px;line-height:48px}
  .add{background:#198754}.cancel{background:#6c757d}`,
  () => `<header><h1>Add To Storage</h1><button aria-label="Close"><ui-icon name="x" style="width:32px;height:32px"></ui-icon></button></header>
  <div class="body"><slot></slot></div>
  <footer><button class="add">Add</button><button class="cancel">Cancel</button></footer>`);

define('vault-page', `
  :host{display:flex;flex:1;min-height:0;position:relative;overflow:hidden;
    background:radial-gradient(circle 2040px at 50% 1460px,#414f58 0,#3c5066 33%,#2e4661 54%,#243f5f 70%,#1b3658 80%,#00254d 100%)}
  main{flex:1;min-width:0;padding:76px 29px 0 0}
  h1{margin:0 0 303px;font:700 428px/508px "Liberation Sans",Arial,sans-serif;text-align:center;color:#080808;-webkit-text-stroke:4px #080808}
  .cards{display:flex;gap:51px;padding:0 74px}
  h1+.cards{margin-top:304px}
  .scroll{width:30px;background:#fafafa;border-left:1px solid #e6e6e6;padding:6px 6px}
  .scroll i{display:block;height:684px;width:16px;border-radius:8px;background:#c1c1c1}
  .overlay{position:absolute;inset:56px 30px auto 0;display:flex;justify-content:center}`,
  () => `<main><h1>myvault.</h1><div class="cards">
    <vault-card label="22" user="22" secret="**" style="--tone:#7b5879"></vault-card>
    <vault-card wrap label="Discord Accounts" user="GamesDiscord" secret="TestingPassword" style="--tone:#517452"></vault-card>
    <vault-card label="Gmail" user="Gamer@gmail.com" secret="**********" style="--tone:#775e5b"></vault-card>
    <vault-card label="Twitch" user="Gamer1337" secret="***************" style="--tone:#6f5e4d"></vault-card>
  </div></main><div class="scroll"><i></i></div>
  <div class="overlay"><modal-dialog>
    <form-field label="Title" hint="Please enter a title" error="Required"></form-field>
    <form-field label="Username" hint="Please enter username" error="Required"></form-field>
    <form-field label="Password" hint="Please enter password" error="Required"></form-field>
    <form-field focused label="Optional: URL" value="https://..bbs" error="Invalid URL"></form-field>
  </modal-dialog></div>`);

define('browser-window', `
  :host{display:flex;flex-direction:column;border-radius:20px;overflow:hidden;box-shadow:0 0 0 1px #000,0 24px 60px 12px rgba(0,0,0,.6)}
  :host::after{content:"";position:absolute;inset:0;border:2px solid rgba(255,255,255,.25);border-radius:20px;pointer-events:none}`,
  () => `<tab-strip></tab-strip><tool-bar></tool-bar><vault-page></vault-page>`);

define('dock-item', `
  :host{display:flex;flex-direction:column;align-items:center;width:88px;padding-top:15px;position:relative}
  .dot{width:8px;height:8px;border-radius:4px;background:#c5c6d2;margin-top:9px}
  .badge{position:absolute;right:0;top:7px;width:32px;height:32px;border-radius:50%;background:#f93e38;color:#fff;font-size:20px;line-height:32px;text-align:center}`,
  el => `<ui-icon name="${attr(el, 'icon')}" style="width:${el.hasAttribute('wide') ? 78 : 66}px;height:68px"></ui-icon>${el.hasAttribute('open') ? '<span class="dot"></span>' : ''}${el.hasAttribute('badge') ? `<span class="badge">${attr(el, 'badge')}</span>` : ''}`);

define('dock-bar', `
  :host{display:flex;height:107px;padding:0 4px;background:linear-gradient(#4a4d56,#454857);border:2px solid #676973;border-radius:32px;box-shadow:0 0 0 1px #2b2c33}
  hr{width:2px;height:78px;margin:12px 19px 0;border:0;background:#858791}`,
  () => {
    const open = ['finder', 'chrome', 'vscode', 'preview'];
    const row = names => names.map(n => `<dock-item icon="${n}"${open.includes(n) ? ' open' : ''}${n === 'settings' ? ' badge="2"' : ''}${n.startsWith('thumb') ? ' wide' : ''}></dock-item>`).join('');
    return row(['finder', 'launchpad', 'mail', 'photos', 'calendar', 'notes', 'safari', 'settings', 'appletv', 'zoom', 'chrome', 'question', 'vscode', 'acrobat', 'preview'])
      + '<hr>' + row(['quicktime', 'stickies', 'textedit']) + '<hr>' + row(['thumbcode', 'thumbpage', 'trash']);
  });

define('desk-top', `
  :host{display:flex;flex-direction:column;height:100vh;overflow:hidden;background:linear-gradient(90deg,#a3a9c6,#8c9cbd 55%,#6d8fbb) 0 0/100% 400px no-repeat,linear-gradient(90deg,#4a5266,#62657d 30%,#5c5f78 60%,#454b60)}
  .space{flex:1;position:relative}
  .rear{position:absolute;inset:10px 64px auto 14px;height:60px;border:2px solid #66686a;border-radius:20px 20px 0 0;background:#2a2b2d;box-shadow:0 0 0 1px #111}
  browser-window{position:absolute;inset:32px 0 88px 0}
  .dock{position:absolute;inset:auto 0 10px 0;display:flex;justify-content:center}`,
  () => `<menu-bar></menu-bar><div class="space"><div class="rear"></div><browser-window></browser-window><div class="dock"><dock-bar></dock-bar></div></div>`);
</script>
</body>
</html>
